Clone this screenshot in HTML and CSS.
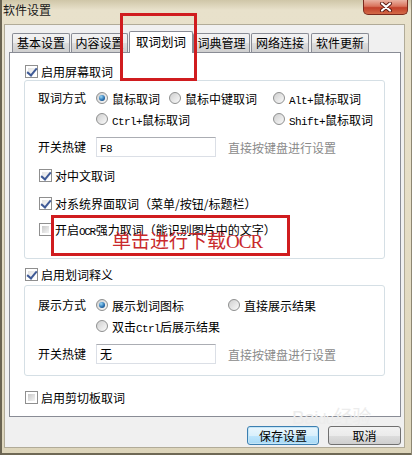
FILE: index.html
```html
<!DOCTYPE html>
<html lang="zh-CN">
<head>
    <meta charset="UTF-8">
    <title>软件设置</title>
    <link rel="stylesheet" href="styles.css">
</head>
<body>
    <div class="window">
        <div class="titlebar">
            <span class="title">软件设置</span>
            <div class="close">
                <svg width="16" height="10" viewBox="0 0 16 10">
                    <path d="M4 1.5 L12 8.5 M12 1.5 L4 8.5" stroke="#5a1a12" stroke-width="4" stroke-linecap="round"/>
                    <path d="M4 1.5 L12 8.5 M12 1.5 L4 8.5" stroke="#ffffff" stroke-width="2.2" stroke-linecap="round"/>
                </svg>
            </div>
        </div>

        <div class="client">
            <div class="tabs">
                <div class="tab t1">基本设置</div>
                <div class="tab t2">内容设置</div>
                <div class="tab active">取词划词</div>
                <div class="tab t4">词典管理</div>
                <div class="tab t5">网络连接</div>
                <div class="tab t6">软件更新</div>
            </div>

            <div class="panel">
                <div class="check top-check">
                    <span class="box on"></span><span>启用屏幕取词</span>
                </div>
                <div class="group g1">
                    <div class="row">
                        <span class="lbl">取词方式</span>
                        <div class="opts opts-a">
                            <div class="opt"><span class="radio on"></span><span>鼠标取词</span></div>
                            <div class="opt"><span class="radio"></span><span>鼠标中键取词</span></div>
                            <div class="opt"><span class="radio"></span><span><span class="en">Alt+</span>鼠标取词</span></div>
                            <div class="opt"><span class="radio"></span><span><span class="en">Ctrl+</span>鼠标取词</span></div>
                            <div class="opt"></div>
                            <div class="opt"><span class="radio"></span><span><span class="en">Shift+</span>鼠标取词</span></div>
                        </div>
                    </div>
                    <div class="row hotkey">
                        <span class="lbl">开关热键</span>
                        <div class="field"><span class="en">F8</span></div>
                        <span class="hint">直接按键盘进行设置</span>
                    </div>
                    <div class="check inner c1">
                        <span class="box on"></span><span>对中文取词</span>
                    </div>
                    <div class="check inner c2">
                        <span class="box on"></span><span>对系统界面取词（菜单/按钮/标题栏）</span>
                    </div>
                    <div class="check inner c3">
                        <span class="box"></span><span>开启<span class="en tight">OCR</span>强力取词（能识别图片中的文字）</span>
                    </div>
                </div>

                <div class="check mid-check">
                    <span class="box on"></span><span>启用划词释义</span>
                </div>
                <div class="group g2">
                    <div class="row">
                        <span class="lbl">展示方式</span>
                        <div class="opts opts-b">
                            <div class="opt"><span class="radio on"></span><span>展示划词图标</span></div>
                            <div class="opt"><span class="radio"></span><span>直接展示结果</span></div>
                            <div class="opt"><span class="radio"></span><span>双击<span class="en">Ctrl</span>后展示结果</span></div>
                        </div>
                    </div>
                    <div class="row hotkey">
                        <span class="lbl">开关热键</span>
                        <div class="field">无</div>
                        <span class="hint">直接按键盘进行设置</span>
                    </div>
                </div>

                <div class="check last-check">
                    <span class="box"></span><span>启用剪切板取词</span>
                </div>
            </div>

            <div class="buttons">
                <div class="btn default">保存设置</div>
                <div class="btn">取消</div>
            </div>
        </div>

        <div class="watermark">Bai<span>du</span>经验</div>
        <div class="mark mark-tab"></div>
        <div class="mark mark-ocr"><span class="mark-text">单击进行下载<span class="mark-en">OCR</span></span></div>
    </div>
</body>
</html>
```

FILE: styles.css
```css
* {
    box-sizing: border-box;
}

body {
    margin: 0;
    width: 412px;
    height: 455px;
    overflow: hidden;
    font-family: "Noto Sans CJK SC", sans-serif;
    font-size: 12px;
    color: #000;
}

/* 窗口外框 (Win7 aero) */
.window {
    position: relative;
    width: 412px;
    height: 455px;
    display: flex;
    flex-direction: column;
    background: linear-gradient(180deg, #cfc6a8 0, #e8e1cb 10px, #e6dec6 40%, #ddd5bb 100%);
    box-shadow: inset 2px 0 0 #6a6452, inset -1px 0 0 #8d8672, inset 0 -2px 0 #6f6955;
}

.titlebar {
    height: 24px;
    display: flex;
    justify-content: space-between;
    align-items: flex-start;
}

.title {
    margin: 3px 0 0 3px;
    line-height: 14px;
    color: #1a1a1a;
}

.close {
    width: 45px;
    height: 15px;
    margin-right: 4px;
    display: flex;
    align-items: center;
    justify-content: center;
    border: 1px solid #7b2a1e;
    border-top: none;
    border-radius: 0 0 5px 5px;
    background: linear-gradient(180deg, #eab2a2 0, #d9735c 45%, #c2402a 55%, #d36a48 100%);
}

.client {
    flex: 1;
    margin: 0 7px 7px 4px;
    padding: 6px 3px 0 4px;
    background: #f0f0f0;
    border: 1px solid #b1ab98;
    display: flex;
    flex-direction: column;
}

/* 选项卡 */
.tabs {
    height: 21px;
    display: flex;
    align-items: flex-end;
    padding-left: 3px;
}

.tab {
    height: 19px;
    line-height: 18px;
    text-align: center;
    border: 1px solid #898c95;
    border-bottom: none;
    border-radius: 2px 2px 0 0;
    background: linear-gradient(180deg, #f3f3f3 0, #ebebeb 50%, #dddddd 51%, #cfcfcf 100%);
}

.t1 { width: 58px; }
.t2 { width: 57px; margin-left: 1px; }
.t4 { width: 57px; }
.t5 { width: 58px; margin-left: 1px; }
.t6 { width: 58px; margin-left: 2px; }

.tab.active {
    position: relative;
    z-index: 1;
    width: 64px;
    height: 22px;
    margin: 0 0 -1px 1px;
    line-height: 19px;
    background: #fff;
    font-size: 12.5px;
}

.panel {
    height: 365px;
    background: #fff;
    border: 1px solid #898c95;
    padding: 9px 15px 0 15px;
}

/* 复选框 */
.check {
    display: flex;
    align-items: center;
    height: 16px;
    gap: 3px;
}

.box {
    width: 13px;
    height: 13px;
    flex: none;
    border: 1px solid #8f8f8f;
    background: #fff;
    padding: 2px;
    position: relative;
}

.box::before {
    content: "";
    display: block;
    width: 100%;
    height: 100%;
    background: linear-gradient(135deg, #c9c9c9, #f4f4f4);
}

.box.on::before {
    background: linear-gradient(135deg, #e2e2e2, #fbfbfb);
}

.box.on::after {
    content: "";
    position: absolute;
    left: 3px;
    top: 0px;
    width: 4px;
    height: 8px;
    border: solid #3f5a96;
    border-width: 0 2px 2px 0;
    transform: rotate(40deg);
}

.top-check { margin-top: 1px; }
.mid-check { margin-top: 7px; }
.last-check { margin-top: 13px; }

/* 分组框 */
.group {
    margin-left: -1px;
    border: 1px solid #d5dfe5;
    border-radius: 3px;
    padding-left: 13px;
}

.g1 {
    margin-top: 1px;
    padding-top: 9px;
    padding-bottom: 21px;
}

.g2 {
    margin-top: 3px;
    padding-top: 11px;
    padding-bottom: 11px;
}

.row {
    display: flex;
    align-items: flex-start;
}

.lbl {
    width: 58px;
    flex: none;
    line-height: 16px;
}

.opts {
    display: grid;
    row-gap: 5px;
}

.opts-a { grid-template-columns: 73px 104px auto; }
.opts-b { grid-template-columns: 132px auto; }

.opt {
    display: flex;
    align-items: center;
    gap: 4px;
    height: 16px;
    white-space: nowrap;
}

.radio {
    width: 12px;
    height: 12px;
    flex: none;
    border-radius: 50%;
    border: 1px solid #8e8f8f;
    background: linear-gradient(135deg, #cfcfcf, #fafafa);
    display: flex;
    align-items: center;
    justify-content: center;
}

.radio.on::after {
    content: "";
    width: 6px;
    height: 6px;
    border-radius: 50%;
    background: radial-gradient(circle at 35% 30%, #9ad8f7 0, #2c74b4 55%, #0d3866 100%);
}

.en {
    font-family: "Liberation Mono", monospace;
    font-size: 11px;
    letter-spacing: -0.6px;
}

.en.tight {
    letter-spacing: -1.4px;
    margin-right: 1px;
}

.hotkey {
    align-items: center;
    margin-top: 10px;
}

.field {
    width: 120px;
    height: 20px;
    line-height: 18px;
    padding-left: 3px;
    border: 1px solid #dbdfe6;
    border-top-color: #abadb3;
    background: #fff;
}

.hint {
    margin-left: 12px;
    color: #8a8a8a;
}

.inner { margin-left: 1px; }
.c1 { margin-top: 10px; }
.c2 { margin-top: 12px; }
.c3 { margin-top: 10px; }

/* 底部按钮 */
.buttons {
    display: flex;
    justify-content: flex-end;
    gap: 9px;
    margin-top: 9px;
}

.btn {
    width: 73px;
    height: 19px;
    line-height: 17px;
    text-align: center;
    border: 1px solid #707070;
    border-radius: 3px;
    background: linear-gradient(180deg, #f2f2f2 0, #ebebeb 50%, #dddddd 51%, #cfcfcf 100%);
}

.btn.default {
    width: 72px;
    border-color: #3c7fb1;
    background: linear-gradient(180deg, #eaf6fd 0, #d9f0fc 50%, #bee6fd 51%, #a7d9f5 100%);
    box-shadow: inset 0 0 0 1px #c4e5f6;
}

/* 百度经验水印 */
.watermark {
    position: absolute;
    left: 292px;
    top: 402px;
    font-family: "Liberation Sans", "Noto Sans CJK SC", sans-serif;
    font-size: 19px;
    color: #ececec;
    letter-spacing: -0.5px;
}

.watermark span {
    font-size: 15px;
}

/* 红色标注框 */
.mark {
    position: absolute;
    border: 3px solid #d01c1f;
    z-index: 5;
}

.mark-tab {
    left: 120px;
    top: 13px;
    width: 77px;
    height: 68px;
}

.mark-ocr {
    left: 51px;
    top: 215px;
    width: 239px;
    height: 41px;
    padding: 12px 0 0 58px;
}

.mark-text {
    display: block;
    line-height: 20px;
    font-size: 19px;
    color: #c92a2c;
    white-space: nowrap;
}

.mark-en {
    font-family: "Liberation Serif", serif;
    font-size: 19px;
    letter-spacing: -1px;
}
```
